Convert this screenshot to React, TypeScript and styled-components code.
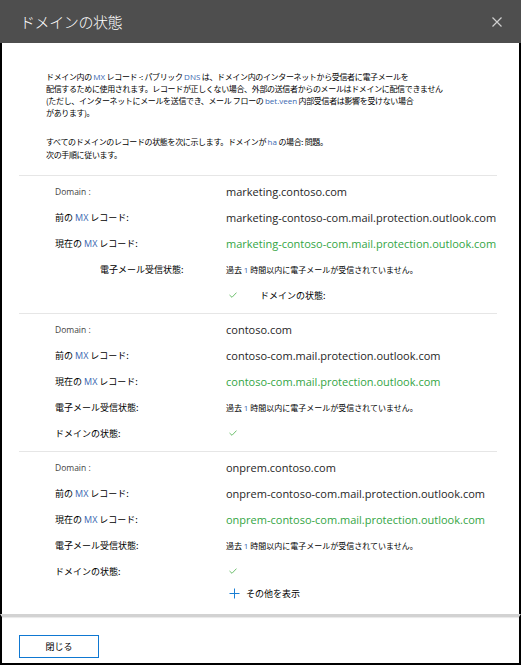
import React from "react";
import styled, { createGlobalStyle } from "styled-components";

const GlobalStyle = createGlobalStyle`
  html, body { margin: 0; padding: 0; background: #fff; }
  body { font-family: "Noto Sans CJK JP", "Noto Sans", sans-serif; -webkit-font-smoothing: antialiased; }
  * { box-sizing: border-box; }
`;

const CJK = `"Noto Sans CJK JP", "Noto Sans", sans-serif`;
const LATIN = `"Open Sans", "Noto Sans CJK JP", sans-serif`;

const Dialog = styled.div`
  width: 521px;
  height: 665px;
  display: flex;
  flex-direction: column;
  background: #fff;
  overflow: hidden;
`;

const Header = styled.header`
  height: 43px;
  flex: none;
  background: #4e4e4e;
  display: flex;
  align-items: center;
  justify-content: space-between;
  padding: 0 19px 0 20px;
`;

const Title = styled.h1`
  margin: 0;
  font-family: ${CJK};
  font-size: 15px;
  font-weight: 300;
  line-height: 1;
  color: #fff;
  letter-spacing: -0.4px;
`;

const CloseButton = styled.button`
  width: 10px;
  height: 10px;
  padding: 0;
  border: 0;
  background: none;
  display: flex;
  cursor: pointer;
`;

const Body = styled.main`
  flex: 1;
  min-height: 0;
  display: flex;
  flex-direction: column;
  border-left: 2px solid #000;
  border-right: 2px solid #000;
  padding: 28px 22px 0 17px;
`;

const Intro = styled.div`
  padding: 0 0 14px 27px;
  font-family: ${CJK};
  font-size: 8px;
  letter-spacing: -0.35px;
  color: #000;
  white-space: nowrap;
`;

const Para = styled.p<{ $lh: number; $gap?: number }>`
  margin: 0 0 ${(p) => p.$gap ?? 0}px;
  line-height: ${(p) => p.$lh}px;
`;

const Latin = styled.span`
  font-family: ${LATIN};
  letter-spacing: 0;
  color: #3a68b0;
`;

const Section = styled.section`
  border-top: 1px solid #e6e6e6;
  padding: 2px 0 5px 36px;
  display: grid;
  grid-template-columns: 171px 1fr;
  grid-auto-rows: 26px;
  align-items: center;
`;

const Label = styled.div<{ $indent?: boolean; $latin?: boolean }>`
  padding-left: ${(p) => (p.$indent ? 45 : 0)}px;
  font-family: ${(p) => (p.$latin ? LATIN : CJK)};
  font-size: ${(p) => (p.$latin ? 8.5 : 9)}px;
  color: ${(p) => (p.$latin ? "#444" : "#000")};
  white-space: nowrap;
`;

const Value = styled.div<{ $green?: boolean }>`
  font-family: ${LATIN};
  font-size: 11px;
  color: ${(p) => (p.$green ? "#33a544" : "#262626")};
  white-space: nowrap;
`;

const Note = styled.div`
  font-family: ${CJK};
  font-size: 8px;
  color: #000;
  white-space: nowrap;
`;

const StatusCell = styled.div`
  display: flex;
  align-items: center;
  padding-left: 3px;
  gap: 23px;
  font-family: ${CJK};
  font-size: 9px;
  color: #000;
  white-space: nowrap;
`;

const MoreLink = styled.button`
  display: flex;
  align-items: center;
  gap: 6px;
  padding: 0 0 0 3px;
  border: 0;
  background: none;
  font-family: ${CJK};
  font-size: 9px;
  color: #000;
  cursor: pointer;
  align-self: start;
  margin-top: 3px;
`;

const Footer = styled.footer`
  height: 51px;
  flex: none;
  border-left: 2px solid #000;
  border-right: 2px solid #000;
  border-bottom: 2px solid #000;
  border-top: 3px solid #d2d2d2;
  box-shadow: inset 0 1px 1px #e8e8e8;
  padding: 14px 0 0 17px;
`;

const CloseAction = styled.button`
  width: 80px;
  height: 23px;
  border: 1px solid #0f78d2;
  background: #fff;
  font-family: ${CJK};
  font-size: 9px;
  color: #000;
  padding: 0;
  cursor: pointer;
`;

const Check = () => (
  <svg width="8" height="6" viewBox="0 0 8 6">
    <polyline points="0.5,3 3,5.3 7.5,0.6" fill="none" stroke="#6dbf6d" strokeWidth="1" />
  </svg>
);

const Plus = () => (
  <svg width="11" height="11" viewBox="0 0 11 11">
    <path d="M5.5 0.5v10M0.5 5.5h10" stroke="#1a7fd4" strokeWidth="1" />
  </svg>
);

const MxLabel = ({ prefix }: { prefix: string }) => (
  <>
    {prefix}の <Latin>MX</Latin> レコード:
  </>
);

type Domain = { name: string; mx: string; variant: "first" | "normal" | "more" };

const domains: Domain[] = [
  { name: "marketing.contoso.com", mx: "marketing-contoso-com.mail.protection.outlook.com", variant: "first" },
  { name: "contoso.com", mx: "contoso-com.mail.protection.outlook.com", variant: "normal" },
  { name: "onprem.contoso.com", mx: "onprem-contoso-com.mail.protection.outlook.com", variant: "more" },
];

const NoMail = () => (
  <Note>
    過去 <Latin>1</Latin> 時間以内に電子メールが受信されていません。
  </Note>
);

const DomainSection = ({ d }: { d: Domain }) => (
  <Section>
    <Label $latin>Domain :</Label>
    <Value>{d.name}</Value>
    <Label>
      <MxLabel prefix="前" />
    </Label>
    <Value>{d.mx}</Value>
    <Label>
      <MxLabel prefix="現在" />
    </Label>
    <Value $green>{d.mx}</Value>
    <Label $indent={d.variant === "first"}>電子メール受信状態:</Label>
    <NoMail />
    {d.variant === "first" ? (
      <>
        <span />
        <StatusCell>
          <Check />
          <span>ドメインの状態:</span>
        </StatusCell>
      </>
    ) : (
      <>
        <Label>ドメインの状態:</Label>
        <StatusCell>
          <Check />
        </StatusCell>
      </>
    )}
    {d.variant === "more" && (
      <>
        <span />
        <MoreLink>
          <Plus />
          その他を表示
        </MoreLink>
      </>
    )}
  </Section>
);

export default function App() {
  return (
    <>
      <GlobalStyle />
      <Dialog>
        <Header>
          <Title>ドメインの状態</Title>
          <CloseButton aria-label="閉じる">
            <svg width="10" height="10" viewBox="0 0 10 10">
              <path d="M0.5 0.5l9 9M9.5 0.5l-9 9" stroke="#cfcfcf" strokeWidth="1.2" />
            </svg>
          </CloseButton>
        </Header>
        <Body>
          <Intro>
            <Para $lh={12} $gap={16}>
              ドメイン内の <Latin>MX</Latin> レコード -: パブリック <Latin>DNS</Latin> は、ドメイン内のインターネットから受信者に電子メールを
              <br />
              配信するために使用されます。レコードが正しくない場合、外部の送信者からのメールはドメインに配信できません
              <br />
              (ただし、インターネットにメールを送信でき、メール フローの <Latin>bet.veen</Latin> 内部受信者は影響を受けない場合
              <br />
              があります)。
            </Para>
            <Para $lh={13}>
              すべてのドメインのレコードの状態を次に示します。ドメインが <Latin>ha</Latin> の場合: 問題。
              <br />
              次の手順に従います。
            </Para>
          </Intro>
          {domains.map((d) => (
            <DomainSection key={d.name} d={d} />
          ))}
        </Body>
        <Footer>
          <CloseAction>閉じる</CloseAction>
        </Footer>
      </Dialog>
    </>
  );
}
